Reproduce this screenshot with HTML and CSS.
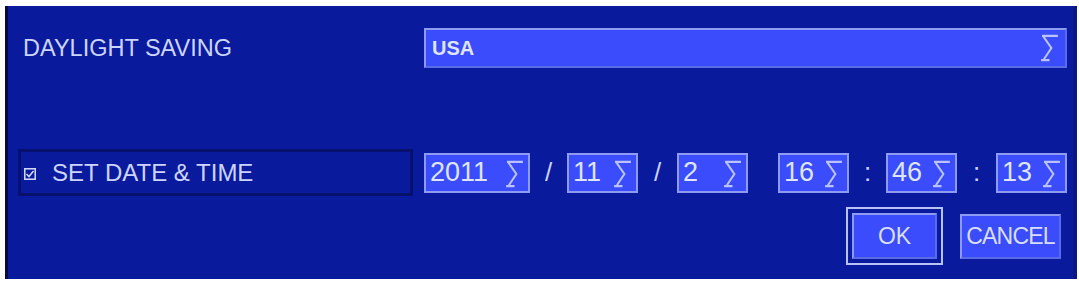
FILE: index.html
```html
<!DOCTYPE html>
<html>
<head>
<meta charset="utf-8">
<link rel="stylesheet" href="styles.css">
</head>
<body>
<div class="panel">
  <div class="row row-ds">
    <span class="label">DAYLIGHT SAVING</span>
    <div class="select">
      <span class="val">USA</span>
      <svg class="sig sig-lg" viewBox="0 0 20 30"><path d="M2 2H19M3 2L12 15L4 27M1 28H10"/></svg>
    </div>
  </div>
  <div class="row row-dt">
    <div class="setbox">
      <svg class="chk" viewBox="0 0 12 12"><rect x="0.75" y="0.75" width="10.5" height="10.5"/><path d="M2.5 6L5 8.5L9.5 3"/></svg>
      <span class="setlabel">SET DATE &amp; TIME</span>
    </div>
    <div class="fields">
      <div class="field w-year"><span>2011</span><svg class="sig" viewBox="0 0 20 30"><path d="M2 2H19M3 2L12 15L4 27M1 28H10"/></svg></div>
      <span class="sep sep-a">/</span>
      <div class="field"><span>11</span><svg class="sig" viewBox="0 0 20 30"><path d="M2 2H19M3 2L12 15L4 27M1 28H10"/></svg></div>
      <span class="sep sep-b">/</span>
      <div class="field"><span>2</span><svg class="sig" viewBox="0 0 20 30"><path d="M2 2H19M3 2L12 15L4 27M1 28H10"/></svg></div>
      <span class="gap"></span>
      <div class="field"><span>16</span><svg class="sig" viewBox="0 0 20 30"><path d="M2 2H19M3 2L12 15L4 27M1 28H10"/></svg></div>
      <span class="sep sep-a">:</span>
      <div class="field"><span>46</span><svg class="sig" viewBox="0 0 20 30"><path d="M2 2H19M3 2L12 15L4 27M1 28H10"/></svg></div>
      <span class="sep sep-b">:</span>
      <div class="field"><span>13</span><svg class="sig" viewBox="0 0 20 30"><path d="M2 2H19M3 2L12 15L4 27M1 28H10"/></svg></div>
    </div>
  </div>
  <div class="row row-btn">
    <div class="btn-wrap focus"><button class="btn btn-ok">OK</button></div>
    <div class="btn-wrap"><button class="btn btn-cancel">CANCEL</button></div>
  </div>
</div>
</body>
</html>
```
FILE: styles.css
```css
html, body {
  margin: 0;
  padding: 0;
  background: #ffffff;
}
body {
  font-family: "Liberation Sans", Arial, sans-serif;
  color: #ccd5ff;
}
.panel {
  box-sizing: border-box;
  margin: 6px 0 0 5px;
  width: 1072px;
  height: 273px;
  background: #0a1a9c;
  border-left: 3px solid #060a3a;
  border-right: 4px solid #0a1880;
  padding: 22px 0 0 10px;
  display: flex;
  flex-direction: column;
}
.row {
  display: flex;
  align-items: center;
}
.row-ds {
  height: 40px;
}
.label {
  width: 406px;
  padding-left: 5px;
  box-sizing: border-box;
  font-size: 23.5px;
}
.select {
  box-sizing: border-box;
  width: 643px;
  height: 40px;
  background: #3a4cfb;
  border: 2px solid #8d9cf2;
  border-right-color: #5a6ae8;
  border-bottom-color: #5a6ae8;
  display: flex;
  align-items: center;
  justify-content: space-between;
  padding: 0 6px 0 6px;
}
.val {
  font-size: 20px;
  font-weight: bold;
  color: #dfe4ff;
}
.sig {
  width: 19px;
  height: 28px;
  fill: none;
  stroke: #b9c3ff;
  stroke-width: 2.2;
}
.row-dt {
  margin-top: 81px;
  height: 47px;
}
.setbox {
  box-sizing: border-box;
  width: 395px;
  height: 47px;
  border: 3px solid #06116e;
  display: flex;
  align-items: center;
  padding-left: 3px;
}
.chk {
  width: 12px;
  height: 12px;
  fill: none;
  stroke: #cfd6ff;
  stroke-width: 1.6;
  margin-right: 16px;
  margin-top: 2px;
}
.setlabel {
  font-size: 24px;
}
.fields {
  display: flex;
  align-items: center;
  margin-left: 11px;
}
.field {
  box-sizing: border-box;
  width: 71px;
  height: 40px;
  background: #3a4cfb;
  border: 2px solid #8d9cf2;
  display: flex;
  align-items: center;
  justify-content: space-between;
  padding: 0 4px 0 4px;
  font-size: 27px;
  color: #dfe4ff;
}
.field .sig {
  margin-top: 2px;
}
.w-year {
  width: 106px;
}
.sep {
  font-size: 26px;
  text-align: center;
  color: #c9d1ff;
}
.sep-a {
  width: 37px;
}
.sep-b {
  width: 39px;
}
.gap {
  width: 30px;
}
.row-btn {
  margin-top: 12px;
  height: 56px;
  justify-content: flex-end;
  padding-right: 6px;
  gap: 11px;
}
.btn-wrap {
  box-sizing: border-box;
  padding: 4px;
  border: 2px solid transparent;
}
.btn-wrap.focus {
  border-color: #b7c2f5;
}
.btn {
  box-sizing: border-box;
  height: 45px;
  background: #3a4cfb;
  border: 2px solid #8d9cf2;
  border-right-color: #5a6ae8;
  border-bottom-color: #5a6ae8;
  color: #d8deff;
  font-family: "Liberation Sans", Arial, sans-serif;
  font-size: 23px;
  padding: 0;
  display: block;
}
.btn-ok {
  width: 85px;
  height: 46px;
}
.btn-cancel {
  width: 101px;
  letter-spacing: -0.8px;
}
```
